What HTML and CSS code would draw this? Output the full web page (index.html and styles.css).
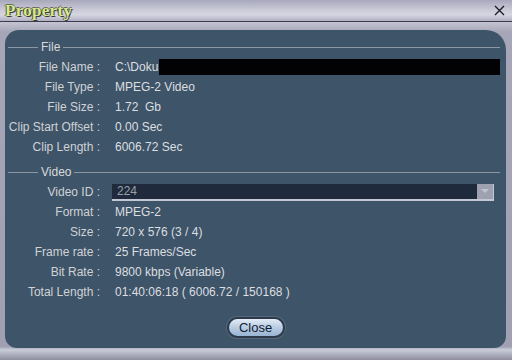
FILE: index.html
```html
<!DOCTYPE html>
<html lang="en">
<head>
  <meta charset="UTF-8" />
  <title>Property</title>
  <link rel="stylesheet" href="styles.css">
</head>
<body>
  <div class="window">
    <div class="titlebar">
      <span class="title">Property</span>
      <svg class="close-x" width="11" height="11" viewBox="0 0 11 11">
        <path d="M1 1 L10 10 M10 1 L1 10" stroke="#1c1c28" stroke-width="1.4" fill="none" />
      </svg>
    </div>

    <div class="frame">
      <div class="panel">

        <!-- File info -->
        <div class="legend"><span>File</span></div>
        <div class="rows">
          <div class="label">File Name :</div>
          <div class="value">C:\Doku<span class="redact"></span></div>
          <div class="label">File Type :</div>
          <div class="value">MPEG-2 Video</div>
          <div class="label">File Size :</div>
          <div class="value">1.72&nbsp; Gb</div>
          <div class="label">Clip Start Offset :</div>
          <div class="value">0.00 Sec</div>
          <div class="label">Clip Length :</div>
          <div class="value">6006.72 Sec</div>
        </div>

        <!-- Video info -->
        <div class="legend video"><span>Video</span></div>
        <div class="rows">
          <div class="label">Video ID :</div>
          <div class="value">
            <div class="select">
              <span>224</span>
              <span class="arrow"></span>
            </div>
          </div>
          <div class="label">Format :</div>
          <div class="value">MPEG-2</div>
          <div class="label">Size :</div>
          <div class="value">720 x 576 (3 / 4)</div>
          <div class="label">Frame rate :</div>
          <div class="value">25 Frames/Sec</div>
          <div class="label">Bit Rate :</div>
          <div class="value">9800 kbps (Variable)</div>
          <div class="label">Total Length :</div>
          <div class="value">01:40:06:18 ( 6006.72 / 150168 )</div>
        </div>

        <div class="actions">
          <button class="btn-close">Close</button>
        </div>
      </div>
    </div>
  </div>
</body>
</html>
```

FILE: styles.css
```css
* {
  margin: 0;
  padding: 0;
  box-sizing: border-box;
}

body {
  width: 512px;
  height: 360px;
  overflow: hidden;
  background: #9a9aaa;
  font-family: "Liberation Sans", Arial, sans-serif;
  font-size: 12px;
}

.window {
  width: 512px;
  height: 360px;
  display: flex;
  flex-direction: column;
}

.titlebar {
  height: 22px;
  display: flex;
  align-items: center;
  justify-content: space-between;
  padding: 0 5px 0 5px;
  background: linear-gradient(#a8a8bc, #c8c8d6 45%, #d6d6e2 70%, #b0b0c2);
  border-bottom: 1px solid #3c3c4e;
}

.title {
  font-family: "Liberation Serif", "Times New Roman", serif;
  font-weight: bold;
  font-size: 17px;
  color: #d6ea8c;
  text-shadow: 1px 1px 0 #3a3a30, -1px 0 0 #5a5a48, 0 -1px 0 #6a6a58;
  letter-spacing: 0.3px;
}

.close-x {
  margin-right: 2px;
}

/* grey window frame around the panel */
.frame {
  flex: 1;
  padding: 8px 6px 12px 5px;
  background: linear-gradient(#c4c4d2, #a6a6b8 10px, #a0a0b2 96%, #c8ccd8 97%, #8e8e9e);
}

.panel {
  height: 100%;
  background: #3e5468;
  border-radius: 14px 20px 12px 12px;
  padding: 7px 6px 0 3px;
  color: #d6d8dc;
}

.legend {
  height: 20px;
  display: flex;
  align-items: center;
  gap: 3px;
}

.legend::before {
  content: "";
  width: 30px;
  border-top: 1px solid #8a98a6;
}

.legend::after {
  content: "";
  flex: 1;
  border-top: 1px solid #8a98a6;
}

.legend span {
  color: #d8dadc;
}

.legend.video {
  margin-top: 5px;
}

.rows {
  display: grid;
  grid-template-columns: 92px 1fr;
  grid-auto-rows: 20px;
  column-gap: 15px;
  align-items: center;
}

.label {
  text-align: right;
  color: #d0d2d6;
}

.value {
  display: flex;
  align-items: center;
  color: #dcdee0;
}

.redact {
  flex: 1;
  height: 16px;
  margin-left: 1px;
  background: #020204;
}

.select {
  width: 382px;
  height: 17px;
  margin-left: -3px;
  display: flex;
  align-items: center;
  justify-content: space-between;
  padding-left: 5px;
  background: #1f2b3c;
  border-bottom: 2px solid #c4c8d4;
  border-right: 1px solid #c4c8d4;
  color: #9aa0aa;
}

.arrow {
  width: 16px;
  height: 15px;
  background: #9ea2b0;
  display: flex;
  align-items: center;
  justify-content: center;
}

.arrow::after {
  content: "";
  border-left: 4px solid transparent;
  border-right: 4px solid transparent;
  border-top: 4px solid #c0c4ce;
}

.actions {
  display: flex;
  justify-content: center;
  margin-top: 15px;
  padding-left: 3px;
}

.btn-close {
  width: 58px;
  height: 21px;
  border-radius: 11px;
  border: 2px solid #2c3a4a;
  background: linear-gradient(#e4ecf6, #b8cce2 50%, #98b4d2);
  box-shadow: 0 0 0 1px #56687c;
  font-family: "Liberation Sans", Arial, sans-serif;
  font-size: 13px;
  color: #101c34;
}
```
